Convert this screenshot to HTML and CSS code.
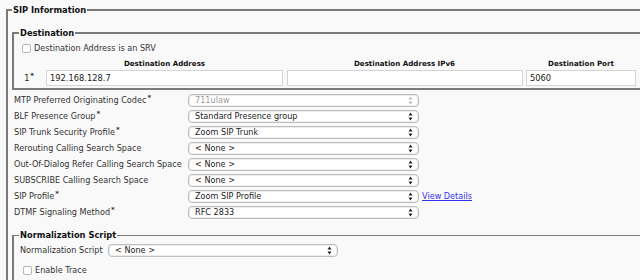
FILE: index.html
```html
<!DOCTYPE html>
<html lang="en">
<head>
  <meta charset="UTF-8" />
  <title>SIP Information</title>
  <link rel="stylesheet" href="styles.css">
</head>
<body>
<fieldset class="box outer">
  <legend>SIP Information</legend>

  <!-- Destination -->
  <fieldset class="box dest">
    <legend>Destination</legend>
    <div class="check-row">
      <span class="check"></span>
      <span>Destination Address is an SRV</span>
    </div>
    <div class="dest-grid">
      <span></span>
      <span class="col-head">Destination Address</span>
      <span class="col-head">Destination Address IPv6</span>
      <span class="col-head">Destination Port</span>
      <span class="num">1<sup>*</sup></span>
      <input class="txt" type="text" value="192.168.128.7">
      <input class="txt" type="text" value="">
      <input class="txt" type="text" value="5060">
    </div>
  </fieldset>

  <div class="form-row first">
    <span class="label">MTP Preferred Originating Codec<sup>*</sup></span>
    <div class="sel disabled"><span>711ulaw</span>
      <svg class="arrows" width="5" height="9" viewBox="0 0 5 9"><path d="M2.5 0.5 L4.5 3.5 L0.5 3.5 Z M2.5 8.5 L4.5 5.5 L0.5 5.5 Z"/></svg>
    </div>
  </div>
  <div class="form-row">
    <span class="label">BLF Presence Group<sup>*</sup></span>
    <div class="sel"><span>Standard Presence group</span>
      <svg class="arrows" width="5" height="9" viewBox="0 0 5 9"><path d="M2.5 0.5 L4.5 3.5 L0.5 3.5 Z M2.5 8.5 L4.5 5.5 L0.5 5.5 Z"/></svg>
    </div>
  </div>
  <div class="form-row">
    <span class="label">SIP Trunk Security Profile<sup>*</sup></span>
    <div class="sel"><span>Zoom SIP Trunk</span>
      <svg class="arrows" width="5" height="9" viewBox="0 0 5 9"><path d="M2.5 0.5 L4.5 3.5 L0.5 3.5 Z M2.5 8.5 L4.5 5.5 L0.5 5.5 Z"/></svg>
    </div>
  </div>
  <div class="form-row">
    <span class="label">Rerouting Calling Search Space</span>
    <div class="sel"><span>&lt; None &gt;</span>
      <svg class="arrows" width="5" height="9" viewBox="0 0 5 9"><path d="M2.5 0.5 L4.5 3.5 L0.5 3.5 Z M2.5 8.5 L4.5 5.5 L0.5 5.5 Z"/></svg>
    </div>
  </div>
  <div class="form-row">
    <span class="label">Out-Of-Dialog Refer Calling Search Space</span>
    <div class="sel"><span>&lt; None &gt;</span>
      <svg class="arrows" width="5" height="9" viewBox="0 0 5 9"><path d="M2.5 0.5 L4.5 3.5 L0.5 3.5 Z M2.5 8.5 L4.5 5.5 L0.5 5.5 Z"/></svg>
    </div>
  </div>
  <div class="form-row">
    <span class="label">SUBSCRIBE Calling Search Space</span>
    <div class="sel"><span>&lt; None &gt;</span>
      <svg class="arrows" width="5" height="9" viewBox="0 0 5 9"><path d="M2.5 0.5 L4.5 3.5 L0.5 3.5 Z M2.5 8.5 L4.5 5.5 L0.5 5.5 Z"/></svg>
    </div>
  </div>
  <div class="form-row">
    <span class="label">SIP Profile<sup>*</sup></span>
    <div class="sel"><span>Zoom SIP Profile</span>
      <svg class="arrows" width="5" height="9" viewBox="0 0 5 9"><path d="M2.5 0.5 L4.5 3.5 L0.5 3.5 Z M2.5 8.5 L4.5 5.5 L0.5 5.5 Z"/></svg>
    </div>
    <a href="#" class="details">View Details</a>
  </div>
  <div class="form-row">
    <span class="label">DTMF Signaling Method<sup>*</sup></span>
    <div class="sel"><span>RFC 2833</span>
      <svg class="arrows" width="5" height="9" viewBox="0 0 5 9"><path d="M2.5 0.5 L4.5 3.5 L0.5 3.5 Z M2.5 8.5 L4.5 5.5 L0.5 5.5 Z"/></svg>
    </div>
  </div>

  <!-- Normalization -->
  <fieldset class="box norm">
    <legend>Normalization Script</legend>
    <div class="norm-row">
      <span class="norm-label">Normalization Script</span>
      <div class="sel"><span>&lt; None &gt;</span>
        <svg class="arrows" width="5" height="9" viewBox="0 0 5 9"><path d="M2.5 0.5 L4.5 3.5 L0.5 3.5 Z M2.5 8.5 L4.5 5.5 L0.5 5.5 Z"/></svg>
      </div>
    </div>
    <div class="check-row">
      <span class="check"></span>
      <span>Enable Trace</span>
    </div>
  </fieldset>
</fieldset>
</body>
</html>
```

FILE: styles.css
```css
* {
  margin: 0;
  padding: 0;
  box-sizing: border-box;
}

html, body {
  height: 100%;
  overflow: hidden;
  background: #f9f9f9;
  font-family: "DejaVu Sans", Verdana, sans-serif;
  font-size: 8.15px;
  line-height: 12px;
  color: #222;
}

body {
  padding-top: 3px;
}

sup {
  font-size: 7px;
  font-weight: bold;
  vertical-align: 3px;
  line-height: 0;
  margin-left: 1px;
}

/* fieldsets */
.box {
  border: 2px solid #7a7a7a;
  min-width: 0;
}

.box legend {
  font-weight: bold;
  font-size: 8.3px;
  line-height: 14px;
  padding: 0 1px;
  margin-left: -1px;
  color: #111;
}

.outer {
  margin-left: 6px;
  width: 700px;
  height: 400px;
  padding: 0 0 0 5px;
}

.dest {
  margin: 9px 0 0 -1px;
  padding: 1px 0 2px 8px;
}

.dest legend {
  margin-left: -3px;
}

.check-row {
  display: flex;
  align-items: center;
  gap: 3px;
  height: 14px;
  color: #333;
}

.check {
  width: 9px;
  height: 9px;
  border: 1px solid #b5b5b5;
  border-radius: 2px;
  background: #fff;
}

.dest-grid {
  display: grid;
  grid-template-columns: 21px 237px 237px 110px;
  column-gap: 3px;
  margin-top: 3px;
  align-items: center;
}

.col-head {
  text-align: center;
  font-weight: bold;
  font-size: 7.1px;
  line-height: 12px;
  color: #111;
}

.num {
  text-align: right;
  padding-right: 9px;
}

.txt {
  height: 16px;
  border: 1px solid #d4d4d4;
  background: #fff;
  font-family: inherit;
  font-size: 8.3px;
  color: #222;
  padding: 0 3px;
}

.dest-grid input:nth-of-type(2) {
  margin-left: 1px;
}

/* form rows */
.form-row {
  display: flex;
  align-items: center;
  height: 16px;
}

.form-row.first {
  margin-top: 2px;
}

.form-row .label {
  width: 175px;
  padding-left: 1px;
  white-space: nowrap;
  color: #333;
}

.sel {
  width: 231px;
  height: 13px;
  border: 1px solid #bdbdbd;
  border-radius: 4px;
  background: #fff;
  display: flex;
  align-items: center;
  justify-content: space-between;
  padding: 0 5px 0 6px;
  color: #222;
  box-shadow: inset 0 0 0 1px #ececec;
}

.sel.disabled {
  color: #999;
}

.arrows {
  fill: #222;
}

.sel.disabled .arrows {
  fill: #bbb;
}

.details {
  margin-left: 3px;
  color: #3333ee;
  text-decoration: underline;
}

.norm {
  margin: 8px 0 0 -1px;
  padding: 0 0 6px 6px;
  border-width: 1px 2px 2px 2px;
}

.norm legend {
  margin-left: -1px;
}

.norm-row {
  display: flex;
  align-items: center;
  height: 16px;
  color: #333;
}

.norm-label {
  width: 88px;
}

.norm .sel {
  width: 230px;
}

.norm .check-row {
  margin: 5px 0 0 3px;
}
```
